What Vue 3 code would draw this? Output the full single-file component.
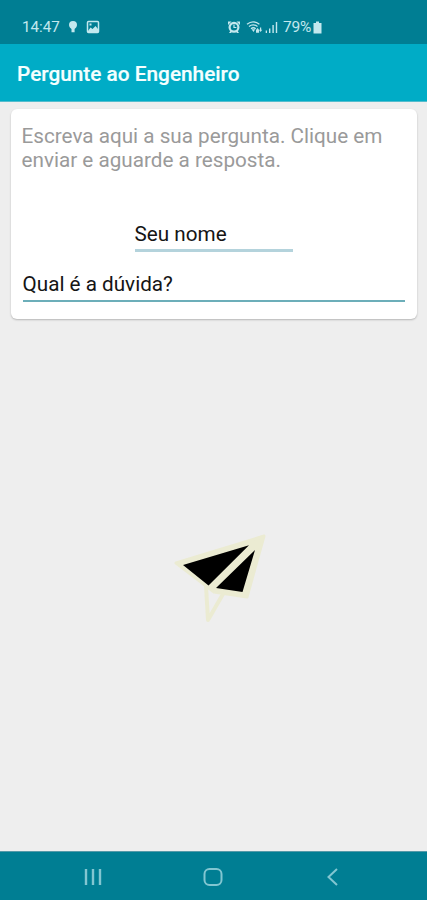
<script setup>
const title = 'Pergunte ao Engenheiro'
</script>

<template>
  <div class="screen">
    <header class="status">
      <span class="time">14:47</span>
      <svg class="pin" width="10" height="14" viewBox="0 0 10 14">
        <path d="M5 1a4 4 0 0 1 4 4c0 2-1.5 3-2.4 4v3.2H3.5V9C2.5 8 1 7 1 5a4 4 0 0 1 4-4z" />
      </svg>
      <svg class="photo" width="14" height="14" viewBox="0 0 14 14">
        <rect x="1.5" y="1.5" width="11" height="11" rx="1" fill="none" stroke="currentColor" stroke-width="1.5" />
        <path d="M2 11l2.5-3.5 2 1.5 3-3 2.5 3v3H2zM3.5 3.5h2v2h-2z" />
      </svg>
      <svg class="alarm" width="14" height="14" viewBox="0 0 14 14">
        <path d="M1 1.5h3.5L1 5zM13 1.5H9.5L13 5zM2 13l2-3 1.5 1L4 13zM12 13l-2-3-1.5 1L10 13z" />
        <circle cx="7" cy="7.3" r="4.4" fill="none" stroke="currentColor" stroke-width="2.2" />
        <path d="M7 4.5v3h2.4" fill="none" stroke="currentColor" stroke-width="1.2" />
      </svg>
      <svg class="wifi" width="17" height="14" viewBox="0 0 17 14">
        <g fill="none" stroke="currentColor" stroke-width="1.3">
          <path d="M1 4.2Q7 -.6 13.4 4.2M3 6.5Q7 3.2 11.5 6.5M5 8.7Q7.3 6.8 9.7 8.7" />
        </g>
        <path d="M5.6 9.2h3.6L7.5 12zM10 10l1.6-2 1.5 2v2.7H10zM14 7.5h1.2v2.2h1L14.6 12 13 9.7h1z" />
      </svg>
      <svg class="signal" width="13" height="14" viewBox="0 0 13 14">
        <path d="M.7 10.5H2V13H.7zM4 8.5h1.4V13H4zM7.4 5h1.4v8H7.4zM10.8 2h1.4v11h-1.4z" />
      </svg>
      <span class="percent">79%</span>
      <svg class="battery" width="9" height="13" viewBox="0 0 9 13">
        <path d="M3 .5h3V2h2.5v10.5h-8V2H3z" />
      </svg>
    </header>

    <div class="toolbar"><h1>{{ title }}</h1></div>

    <main>
      <section class="card">
        <p class="hint">Escreva aqui a sua pergunta. Clique em<br />enviar e aguarde a resposta.</p>
        <div class="field name"><span>Seu nome</span></div>
        <div class="field question"><span>Qual é a dúvida?</span></div>
      </section>
      <button class="send" aria-label="Enviar">
        <svg width="100" height="100" viewBox="170 527 100 100">
          <g fill="#ebebd2" stroke="#ebebd2" stroke-width="3" stroke-linejoin="round">
            <path d="M176 563L264 536 247 597 214 592z" />
            <path d="M206 586L208 620 223 594" fill="none" stroke-width="4" />
          </g>
          <path d="M183 565L249 545.3 208.5 585.5zM255 550L242.5 592 216 588z" fill="#000" />
        </svg>
      </button>
    </main>

    <nav class="navigation">
      <svg width="20" height="20" viewBox="0 0 20 20">
        <path d="M3 2v16M10 2v16M17 2v16" stroke-width="2.4" />
      </svg>
      <svg width="20" height="20" viewBox="0 0 20 20">
        <rect x="1.5" y="2" width="17" height="16" rx="5" stroke-width="2" />
      </svg>
      <svg width="20" height="20" viewBox="0 0 20 20">
        <path d="M14 2L5.5 10 14 18" stroke-width="2" />
      </svg>
    </nav>
  </div>
</template>

<style>
body { margin: 0; }
</style>

<style scoped>
.screen {
  display: flex;
  flex-direction: column;
  width: 427px;
  height: 900px;
  overflow: hidden;
  background: #eee;
  font-family: Roboto, "Liberation Sans", sans-serif;
}
.status {
  display: flex;
  align-items: center;
  box-sizing: border-box;
  height: 44px;
  padding: 10px 0 0 22px;
  background: #007e93;
  color: #c3e8ee;
  font-size: 15.2px;
}
.status svg { fill: currentColor; flex: none; }
.time { width: 46px; }
.photo { margin-left: 8px; }
.alarm { margin-left: 127px; }
.wifi { margin-left: 5px; }
.signal { margin-left: 2px; }
.percent { width: 30px; margin-left: 5px; font-size: 15.5px; letter-spacing: -0.2px; }
.toolbar {
  display: flex;
  align-items: center;
  box-sizing: border-box;
  height: 58px;
  padding: 2px 17px 0;
  border-bottom: 1px solid #55bdcd;
  background: #00acc6;
}
h1 {
  margin: 0;
  color: #f4ffff;
  font-size: 20.8px;
  font-weight: 500;
  line-height: 24px;
  -webkit-text-stroke: 0.2px currentColor;
}
main {
  display: flex;
  flex: 1;
  flex-direction: column;
  align-items: center;
}
.card {
  display: flex;
  flex-direction: column;
  box-sizing: border-box;
  width: 406px;
  height: 210px;
  margin-top: 7px;
  padding: 15px 12px 0 11px;
  border-radius: 6px;
  background: #fff;
  box-shadow: 0 1px 2px #0000003d;
}
.hint {
  margin: 0;
  color: #9a9a9a;
  font-size: 20.7px;
  line-height: 24px;
  white-space: nowrap;
}
.field {
  box-sizing: border-box;
  color: #151515;
  font-size: 20.7px;
  line-height: 24px;
  white-space: nowrap;
}
.name {
  width: 158px;
  height: 30px;
  margin: 50px 0 0 113px;
  border-bottom: 3px solid #b4d3dc;
}
.question {
  height: 30px;
  margin: 20px 0 0 1px;
  border-bottom: 2px solid #6caeb9;
}
.send {
  display: flex;
  margin: 208px 0 0 13px;
  padding: 0;
  border: 0;
  background: none;
}
.navigation {
  display: flex;
  align-items: center;
  justify-content: center;
  gap: 100px;
  box-sizing: border-box;
  height: 49px;
  padding: 2px 2px 0 0;
  border-top: 1px solid #5599a8;
  background: #007e93;
}
.navigation svg { fill: none; stroke: #82c6d1; }
</style>
